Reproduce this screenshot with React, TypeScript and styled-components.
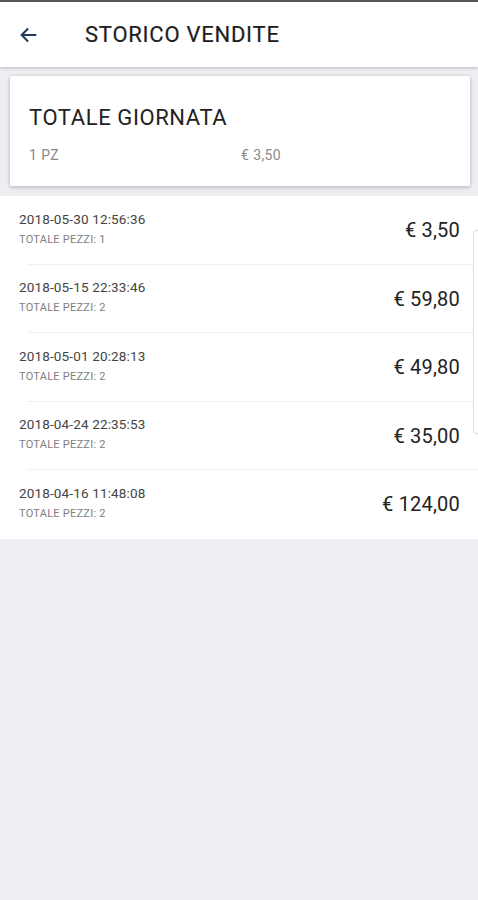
import React from "react";
import styled, { createGlobalStyle } from "styled-components";

const Global = createGlobalStyle`
  html, body { margin: 0; padding: 0; }
  body { background: #eceef1; font-family: Roboto, "Noto Sans", Arial, sans-serif; }
  * { box-sizing: border-box; }
`;

const Screen = styled.div`
  position: relative;
  width: 478px;
  min-height: 900px;
  background: #eceef1;
  border-top: 2px solid #5a5a5a;
`;

const Header = styled.header`
  height: 65px;
  background: #fff;
  display: flex;
  align-items: center;
  padding-left: 17px;
  box-shadow: 0 1px 3px rgba(0, 0, 0, 0.22);
  position: relative;
  z-index: 2;
`;

const BackButton = styled.button`
  width: 24px;
  height: 24px;
  border: 0;
  padding: 0;
  background: none;
  display: flex;
  align-items: center;
  justify-content: center;
  margin-right: 44px;
`;

const Title = styled.h1`
  margin: 0;
  font-size: 22px;
  font-weight: 400;
  color: #1e1e1e;
  letter-spacing: 0.75px;
  -webkit-text-stroke: 0.2px #1e1e1e;
`;

const Content = styled.main`
  padding-top: 9px;
`;

const Card = styled.section`
  margin: 0 8px 0 10px;
  background: #fff;
  height: 110px;
  padding: 28px 19px 0;
  box-shadow: 0 1px 4px rgba(0, 0, 0, 0.28);
  border-radius: 2px;
`;

const CardTitle = styled.div`
  font-size: 22px;
  color: #222;
  line-height: 28px;
  letter-spacing: 0.6px;
`;

const CardStats = styled.div`
  display: grid;
  grid-template-columns: 212px auto;
  margin-top: 15px;
  font-size: 14px;
  letter-spacing: 0.4px;
  color: #8a8a8a;
`;

const List = styled.ul`
  list-style: none;
  margin: 10px 0 0;
  padding: 0;
  background: #fff;
`;

const Row = styled.li<{ $last?: boolean }>`
  position: relative;
  height: 68.5px;
  display: flex;
  align-items: center;
  justify-content: space-between;
  padding: 0 18px 0 19px;
  &::after {
    content: "";
    display: ${(p) => (p.$last ? "none" : "block")};
    position: absolute;
    left: 27px;
    right: 0;
    bottom: 0;
    height: 1px;
    background: #f0f0f0;
  }
`;

const Info = styled.div`
  display: flex;
  flex-direction: column;
  margin-top: -3px;
`;

const DateText = styled.span`
  font-size: 13.5px;
  color: #444;
  line-height: 17px;
  letter-spacing: 0.15px;
`;

const Pieces = styled.span`
  font-size: 11px;
  color: #808080;
  line-height: 14px;
  margin-top: 5px;
  letter-spacing: 0.25px;
`;

const Amount = styled.span`
  font-size: 20px;
  color: #222;
  letter-spacing: 0.2px;
`;

const ScrollHint = styled.div`
  position: absolute;
  right: 0;
  top: 228px;
  width: 5px;
  height: 204px;
  border: 1px solid #dcdcdc;
  border-right: 0;
  border-radius: 4px 0 0 4px;
  background: #fff;
`;

const sales = [
  { date: "2018-05-30 12:56:36", pz: 1, amount: "€ 3,50" },
  { date: "2018-05-15 22:33:46", pz: 2, amount: "€ 59,80" },
  { date: "2018-05-01 20:28:13", pz: 2, amount: "€ 49,80" },
  { date: "2018-04-24 22:35:53", pz: 2, amount: "€ 35,00" },
  { date: "2018-04-16 11:48:08", pz: 2, amount: "€ 124,00" },
];

export default function App() {
  return (
    <Screen>
      <Global />
      <Header>
        <BackButton aria-label="Indietro">
          <svg width="22" height="22" viewBox="0 0 24 24" fill="none">
            <path
              d="M20 12H4.5M11 5l-7 7 7 7"
              stroke="#1d3b5e"
              strokeWidth="2.2"
              strokeLinecap="butt"
            />
          </svg>
        </BackButton>
        <Title>STORICO VENDITE</Title>
      </Header>
      <Content>
        <Card>
          <CardTitle>TOTALE GIORNATA</CardTitle>
          <CardStats>
            <span>1 PZ</span>
            <span>€ 3,50</span>
          </CardStats>
        </Card>
        <List>
          {sales.map((s, i) => (
            <Row key={s.date} $last={i === sales.length - 1}>
              <Info>
                <DateText>{s.date}</DateText>
                <Pieces>TOTALE PEZZI: {s.pz}</Pieces>
              </Info>
              <Amount>{s.amount}</Amount>
            </Row>
          ))}
        </List>
      </Content>
      <ScrollHint />
    </Screen>
  );
}
